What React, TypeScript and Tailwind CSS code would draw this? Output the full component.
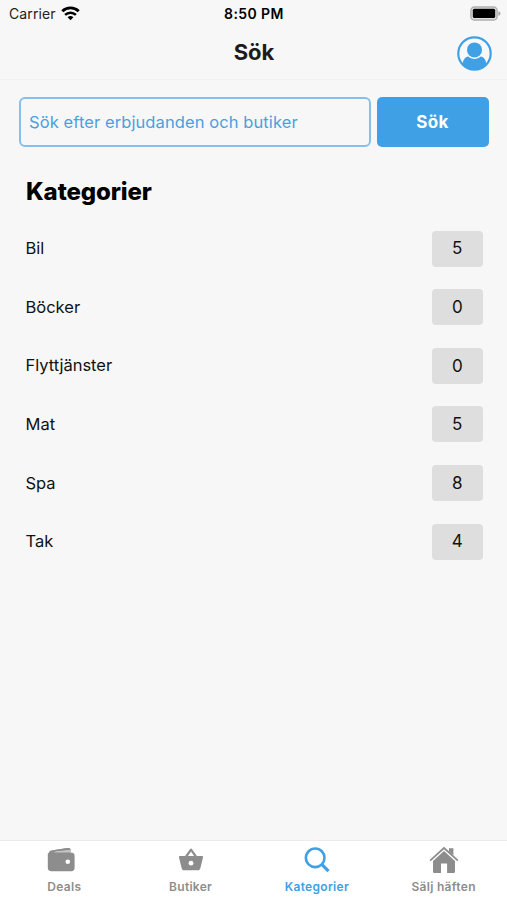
const categories = [
  { name: 'Bil', count: 5 },
  { name: 'Böcker', count: 0 },
  { name: 'Flyttjänster', count: 0 },
  { name: 'Mat', count: 5 },
  { name: 'Spa', count: 8 },
  { name: 'Tak', count: 4 },
];

function WifiIcon() {
  return (
    <svg className="ml-[5px] h-[15px] w-[19px]" viewBox="0 0 19 15" fill="none" stroke="#000" strokeWidth="2.9">
      <path d="M1.3 5.2C5.8 .8 13.2 .8 17.7 5.2" />
      <path d="M4.1 8.9C7.2 6 11.8 6 14.9 8.9" strokeWidth="2.6" />
      <path d="M6.6 11.2C8.3 9.7 10.7 9.7 12.4 11.2L9.5 14.2Z" fill="#000" stroke="none" />
    </svg>
  );
}

function BatteryIcon() {
  return (
    <svg className="h-[15px] w-[31px]" viewBox="0 0 31 15">
      <rect x=".9" y=".9" width="26.2" height="13.2" rx="3.6" fill="#e2e2e2" stroke="#b0b0b0" strokeWidth="1.5" />
      <rect x="2.8" y="2.8" width="22.4" height="9.2" rx="1.5" fill="#000" />
      <path d="M28.4 5.2c2.8.8 2.8 3.8 0 4.6z" fill="#a6a6a6" />
    </svg>
  );
}

function ProfileIcon() {
  return (
    <svg className="h-[35px] w-[35px]" viewBox="0 0 35 35">
      <circle cx="17.5" cy="17.5" r="16.2" fill="#f9f9f9" stroke="#40a0e6" strokeWidth="2.2" />
      <circle cx="17.5" cy="13.9" r="7.5" fill="#40a0e6" />
      <path d="M5.6 28.2C6 24 8 21.2 11.2 20.6C15 23.9 20 23.9 23.8 20.6C27 21.2 29 24 29.4 28.2C23.6 35.6 11.4 35.6 5.6 28.2Z" fill="#40a0e6" />
    </svg>
  );
}

function WalletIcon() {
  return (
    <svg className="h-[28px] w-[28px]" viewBox="0 0 28 28">
      <path d="M2 6.8C2 5.5 3 4.9 4.4 4.6L20.5 2C22.5 1.7 23.5 2.5 23.5 3.7V6.6C26 6.6 27.6 7.8 27.6 9.8V21.8C27.6 24.1 26.4 25.2 24.4 25.2H4.4C2 25.2 .8 24 .8 21.8V8.5C.8 7.5 1.2 7 2 6.8Z" fill="#8d8d8d" />
      <path d="M7.2 6.2C8 5.4 9 5.1 11 4.7L23.5 3.4V6.4H7.2Z" fill="#c4c4c4" />
      <path d="M4.4 4.6L20.5 2C22.5 1.7 23.5 2.5 23.5 3.7L8 5.3Z" fill="#8d8d8d" />
      <circle cx="20.8" cy="15.7" r="2.3" fill="#fff" />
    </svg>
  );
}

function BasketIcon() {
  return (
    <svg className="h-[28px] w-[28px]" viewBox="0 0 28 28">
      <path d="M8.8 11L14 3.7L19.2 11" fill="none" stroke="#8d8d8d" strokeWidth="2.2" strokeLinejoin="round" />
      <path d="M3.2 9.9H24.8C25.8 9.9 26.2 10.5 26 11.5L23.4 21.9C23 23.5 22.2 24.2 20.8 24.2H7.2C5.8 24.2 5 23.5 4.6 21.9L2 11.5C1.8 10.5 2.2 9.9 3.2 9.9Z" fill="#8d8d8d" />
      <circle cx="14" cy="17.2" r="2.4" fill="#fff" />
    </svg>
  );
}

function SearchIcon() {
  return (
    <svg className="h-[28px] w-[28px]" viewBox="0 0 28 28" fill="none" stroke="#40a0e6">
      <circle cx="12.2" cy="11.8" r="9.3" strokeWidth="2.6" />
      <path d="M19 18.6L25.5 25.1" strokeWidth="3.2" />
    </svg>
  );
}

function HomeIcon() {
  return (
    <svg className="h-[28px] w-[30px]" viewBox="0 0 30 28">
      <path d="M1.1 14.6L15 2L28.9 14.6" fill="none" stroke="#8d8d8d" strokeWidth="1.7" />
      <path d="M20 2.2H24.4V9.4L20 5.4Z" fill="#8d8d8d" />
      <path d="M15 4.9L26 14.9V25.5C26 26.6 25.4 27.1 24.4 27.1H18.1V17.5H12V27.1H5.6C4.6 27.1 4 26.6 4 25.5V14.9Z" fill="#8d8d8d" />
    </svg>
  );
}

const tabs = [
  { label: 'Deals', Icon: WalletIcon, active: false, pad: 'pr-[4px]', labelPad: 'pl-[2px]' },
  { label: 'Butiker', Icon: BasketIcon, active: false, pad: 'pl-px', labelPad: 'pl-px' },
  { label: 'Kategorier', Icon: SearchIcon, active: true, pad: '', labelPad: '' },
  { label: 'Sälj häften', Icon: HomeIcon, active: false, pad: '', labelPad: '' },
];

export default function App() {
  return (
    <div className="flex h-[900px] w-[507px] flex-col overflow-hidden bg-[#f7f7f7] font-['Inter',sans-serif] text-black">
      <header className="flex h-[80px] flex-col border-b border-[#f1f1f1]">
        <div className="grid h-[27px] grid-cols-3 items-center pl-[8px] pr-[6px]">
          <div className="flex items-center pl-px text-[14px] tracking-[0.1px] text-[#222]">
            <span>Carrier</span>
            <WifiIcon />
          </div>
          <div className="pr-px text-center text-[14px] font-semibold tracking-[0.4px]">8:50 PM</div>
          <div className="flex justify-end"><BatteryIcon /></div>
        </div>
        <div className="grid flex-1 grid-cols-[50px_1fr_50px] items-center pl-[15px] pr-[15px]">
          <h1 className="col-start-2 pb-[2px] pl-px text-center text-[22px] font-bold leading-[28px] text-[#1c1c1c]">Sök</h1>
          <div className="flex justify-end"><ProfileIcon /></div>
        </div>
      </header>

      <main className="flex-1">
        <div className="flex gap-[6px] pl-[19px] pr-[18px] pt-[17px]">
          <div className="flex h-[50px] w-[352px] items-center rounded-[6px] border-2 border-[#85c0ec] pl-[8px] text-[16.5px] tracking-[0.09px] text-[#4aa0df]">
            <span>Sök efter erbjudanden och butiker</span>
          </div>
          <button className="h-[50px] flex-1 rounded-[5px] bg-[#40a0e6] pr-px pt-[2px] text-[17px] font-bold tracking-[0.3px] text-white">Sök</button>
        </div>
        <h2 className="ml-[26px] mt-[29px] text-[24px] font-extrabold leading-[32px] tracking-[-0.1px]">Kategorier</h2>
        <ul className="mt-[22.6px] flex flex-col gap-[22.6px] pl-[25.5px] pr-[24.5px]">
          {categories.map((c) => (
            <li key={c.name} className="flex h-[36px] items-center justify-between text-[16.5px] text-[#111]">
              <span>{c.name}</span>
              <span className="flex h-[36px] w-[50.5px] items-center justify-center rounded-[4px] bg-[#dedede] pt-px text-[17px]">{c.count}</span>
            </li>
          ))}
        </ul>
      </main>

      <nav className="grid h-[60px] grid-cols-4 border-t border-[#ececec] bg-white">
        {tabs.map(({ label, Icon, active, pad, labelPad }) => (
          <div key={label} className="flex flex-col items-center pt-[5px]">
            <div className={pad}><Icon /></div>
            <div className={labelPad}>
              <span className={`mt-[5px] block text-[12px] font-semibold leading-[16px] tracking-[0.3px] ${active ? 'text-[#40a0e6]' : 'text-[#8d8d8d]'}`}>{label}</span>
            </div>
          </div>
        ))}
      </nav>
    </div>
  );
}
